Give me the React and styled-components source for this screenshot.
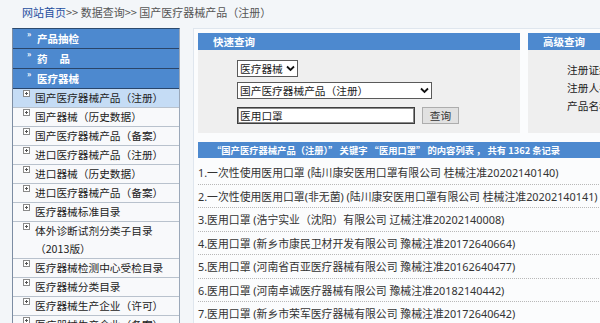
import React from 'react';
import styled, { createGlobalStyle } from 'styled-components';

const Global = createGlobalStyle`
  html, body { margin: 0; padding: 0; overflow: hidden; background: #f3f6f9; }
  body { font-family: "Noto Sans CJK SC", "Noto Sans", sans-serif; }
  * { box-sizing: border-box; }
`;

const Page = styled.div`
  width: 900px;
`;

const Breadcrumb = styled.div`
  height: 28px;
  padding: 5px 0 0 22px;
  font-size: 11px;
  line-height: 14px;
  color: #555;
  white-space: nowrap;
`;

const HomeLink = styled.a`
  color: #1f4f9f;
  text-decoration: none;
`;

const Main = styled.div`
  display: flex;
  align-items: flex-start;
  padding-left: 12px;
`;

const Sidebar = styled.div`
  width: 168px;
  flex: none;
  border-left: 1px solid #7d8da3;
  border-right: 1px solid #9ba8b9;
  border-top: 1px solid #2b4a6e;
`;

const SideHeader = styled.div`
  height: 20px;
  display: flex;
  padding-left: 14px;
  background: #4d89cf;
  border-bottom: 1px solid #2a4569;
  color: #fff;
  font-weight: bold;
  font-size: 10.5px;
`;

const Raquo = styled.span`
  font-size: 8px;
  line-height: 8px;
  margin-top: 1px;
  width: 10px;
  flex: none;
`;

const HeaderText = styled.span`
  line-height: 19px;
  white-space: pre;
`;

const SideItem = styled.div`
  display: flex;
  padding: 0 4px 0 10px;
  min-height: 19px;
  background: ${p => (p.$active ? '#c5dcf5' : '#f8f9fb')};
  border-bottom: 1px solid #b9c2cd;
  color: #222;
`;

const PlusBox = styled.svg`
  flex: none;
  margin-top: 1px;
  width: 7px;
  height: 7px;
`;

const ItemText = styled.span`
  margin-left: 5px;
  font-size: 10.7px;
  line-height: 18px;
  width: 138px;
`;

const Content = styled.div`
  margin-left: 13px;
  flex: 1;
  border: 1px solid #dfe6ee;
  background: #fbfcfd;
  padding: 4px;
`;

const TopPanels = styled.div`
  display: flex;
  gap: 8px;
`;

const Panel = styled.div`
  width: ${p => p.$w}px;
  height: 100px;
  background: #efefef;
  flex: none;
`;

const PanelHeader = styled.div`
  height: 17px;
  background: #4d89cf;
  color: #fff;
  font-weight: bold;
  font-size: 10.5px;
  line-height: 17px;
  padding-left: 15px;
`;

const QuickBody = styled.div`
  display: flex;
  flex-direction: column;
  align-items: flex-start;
  padding: 10px 0 0 39px;
  gap: 5px;
`;

const SelectWrap = styled.div`
  position: relative;
  width: ${p => p.$w}px;
  height: 17px;
`;

const Select = styled.select`
  appearance: none;
  -webkit-appearance: none;
  display: block;
  width: 100%;
  height: 100%;
  border: 1px solid #5a5a5a;
  border-radius: 0;
  background: #fff;
  font-family: inherit;
  font-size: 10.7px;
  color: #222;
  padding: 0 12px 0 2px;
  line-height: 15px;
  outline: none;
`;

const Chevron = styled.svg`
  position: absolute;
  z-index: 2;
  right: 3px;
  top: 5px;
  width: 9px;
  height: 7px;
  pointer-events: none;
`;

const SearchRow = styled.div`
  display: flex;
  gap: 7px;
  margin-top: 3px;
`;

const TextInput = styled.input`
  width: 178px;
  height: 17px;
  border: 1px solid #3e3e3e;
  box-shadow: inset 0 0 0 1px #8a8a8a;
  background: #fff;
  font-family: inherit;
  font-size: 10.7px;
  color: #222;
  padding: 0 2px;
  outline: none;
`;

const Button = styled.button`
  width: 37px;
  height: 17px;
  border: 1px solid #adadad;
  background: #e1e1e1;
  font-family: inherit;
  font-size: 10.7px;
  color: #333;
  padding: 0;
  line-height: 15px;
`;

const AdvBody = styled.div`
  padding: 11px 0 0 39px;
  font-size: 10.7px;
  line-height: 18px;
  color: #222;
  white-space: nowrap;
`;

const Results = styled.div`
  margin-top: 9px;
`;

const ResultBar = styled.div`
  height: 16px;
  background: #4d89cf;
  color: #fff;
  font-weight: bold;
  font-size: 9.3px;
  line-height: 16px;
  padding-left: 14px;
  white-space: pre;
`;

const List = styled.div`
  margin-top: 3px;
`;

const Row = styled.div`
  height: 23.5px;
  border-bottom: 1px dotted #b8b8b8;
  display: flex;
  align-items: center;
  font-family: "Noto Sans", "Noto Sans CJK SC", sans-serif;
  font-size: 10.85px;
  color: #333;
  white-space: nowrap;
`;

const Plus = () => (
  <PlusBox viewBox="0 0 7 7">
    <rect x="0.5" y="0.5" width="6" height="6" fill="#fff" stroke="#8a8a8a" strokeWidth="1" />
    <path d="M2 3.5H5M3.5 2V5" stroke="#555" strokeWidth="1" />
  </PlusBox>
);

const Drop = () => (
  <Chevron viewBox="0 0 9 7">
    <path d="M1 1.5L4.5 5L8 1.5" fill="none" stroke="#111" strokeWidth="1.8" />
  </Chevron>
);

const headers = ['产品抽检', '药\u00a0\u00a0\u00a0\u00a0\u00a0品', '医疗器械'];
const items = [
  '国产医疗器械产品（注册）',
  '国产器械（历史数据）',
  '国产医疗器械产品（备案）',
  '进口医疗器械产品（注册）',
  '进口器械（历史数据）',
  '进口医疗器械产品（备案）',
  '医疗器械标准目录',
  '体外诊断试剂分类子目录（2013版）',
  '医疗器械检测中心受检目录',
  '医疗器械分类目录',
  '医疗器械生产企业（许可）',
  '医疗器械生产企业（备案）',
];

const rows = [
  '1.一次性使用医用口罩 (陆川康安医用口罩有限公司 桂械注准20202140140)',
  '2.一次性使用医用口罩(非无菌) (陆川康安医用口罩有限公司 桂械注准20202140141)',
  '3.医用口罩 (浩宁实业（沈阳）有限公司 辽械注准20202140008)',
  '4.医用口罩 (新乡市康民卫材开发有限公司 豫械注准20172640664)',
  '5.医用口罩 (河南省百亚医疗器械有限公司 豫械注准20162640477)',
  '6.医用口罩 (河南卓诚医疗器械有限公司 豫械注准20182140442)',
  '7.医用口罩 (新乡市荣军医疗器械有限公司 豫械注准20172640642)',
  '8.医用口罩 (河南驼人医疗器械集团有限公司 豫械注准20172640001)',
];

export default function App() {
  return (
    <Page>
      <Global />
      <Breadcrumb>
        <HomeLink href="#">网站首页</HomeLink>&gt;&gt; 数据查询&gt;&gt; 国产医疗器械产品（注册）
      </Breadcrumb>
      <Main>
        <Sidebar>
          {headers.map(h => (
            <SideHeader key={h}>
              <Raquo>»</Raquo>
              <HeaderText>{h}</HeaderText>
            </SideHeader>
          ))}
          {items.map((t, i) => (
            <SideItem key={t} $active={i === 0}>
              <Plus />
              <ItemText>{t}</ItemText>
            </SideItem>
          ))}
        </Sidebar>
        <Content>
          <TopPanels>
            <Panel $w={322}>
              <PanelHeader>快速查询</PanelHeader>
              <QuickBody>
                <SelectWrap $w={61}>
                  <Select defaultValue="a">
                    <option value="a">医疗器械</option>
                  </Select>
                  <Drop />
                </SelectWrap>
                <SelectWrap $w={195}>
                  <Select defaultValue="a">
                    <option value="a">国产医疗器械产品（注册）</option>
                  </Select>
                  <Drop />
                </SelectWrap>
                <SearchRow>
                  <TextInput defaultValue="医用口罩" />
                  <Button>查询</Button>
                </SearchRow>
              </QuickBody>
            </Panel>
            <Panel $w={300}>
              <PanelHeader>高级查询</PanelHeader>
              <AdvBody>
                <div>注册证编号：</div>
                <div>注册人名称：</div>
                <div>产品名称：</div>
              </AdvBody>
            </Panel>
          </TopPanels>
          <Results>
            <ResultBar>{'“国产医疗器械产品（注册）” 关键字 “医用口罩” 的内容列表 ， 共有 1362 条记录'}</ResultBar>
            <List>
              {rows.map(r => (
                <Row key={r}>{r}</Row>
              ))}
            </List>
          </Results>
        </Content>
      </Main>
    </Page>
  );
}
